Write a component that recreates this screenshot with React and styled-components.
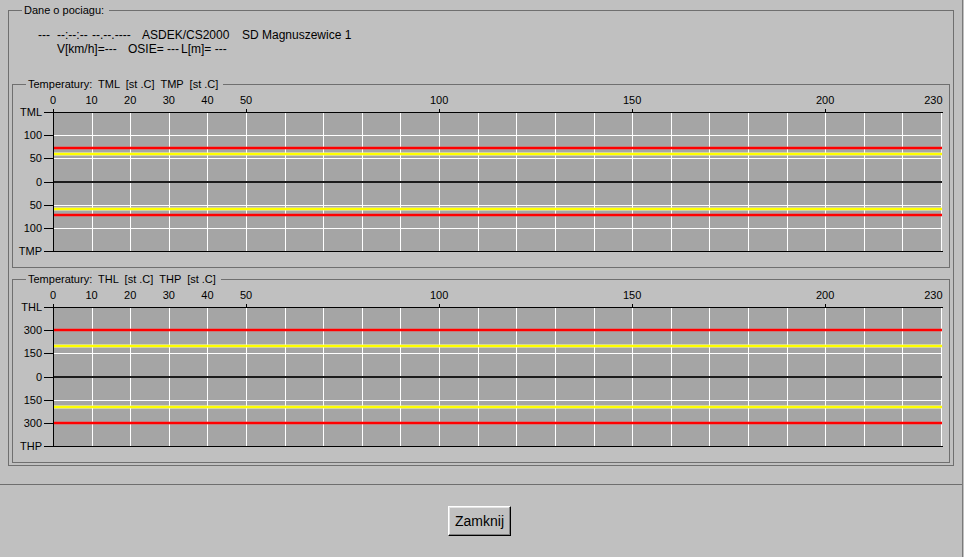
import React from 'react';
import styled, { createGlobalStyle } from 'styled-components';

const GlobalStyle = createGlobalStyle`
  html, body {
    margin: 0;
    padding: 0;
    background: #c0c0c0;
  }
  body {
    font-family: "Liberation Sans", Arial, sans-serif;
  }
`;

const Window = styled.div`
  width: 962px;
  height: 557px;
  border-right: 1px solid #7a7a7a;
  display: flex;
  flex-direction: column;
  background: #c0c0c0;
  color: #000;
  font-family: "Liberation Sans", Arial, sans-serif;
`;

const TopPanel = styled.div`
  height: 485px;
  box-sizing: border-box;
  padding: 3px 8px 0;
  border-bottom: 1px solid #6e6e6e;
`;

const Group = styled.fieldset`
  margin: ${p => (p.$inset ? '0 3px' : '0')};
  padding: 0;
  border: 1px solid #6f6f6f;
  min-width: 0;
`;

const Legend = styled.legend`
  margin-left: 13px;
  padding: 0 5px 0 2px;
  font-size: 11px;
  line-height: 14px;
  white-space: pre;
`;

const Info = styled.div`
  padding: 11px 0 21px;
  font-size: 12px;
  line-height: 14px;
`;

const InfoRow = styled.div`
  display: flex;
  padding-left: ${p => p.$indent}px;
`;

const Field = styled.span`
  flex: none;
  width: ${p => (p.$w ? `${p.$w}px` : 'auto')};
  white-space: pre;
`;

const ChartStack = styled.div`
  display: flex;
  flex-direction: column;
  gap: 4px;
  margin-bottom: 2px;
`;

const Plot = styled.svg`
  display: block;
  font-family: "Liberation Sans", Arial, sans-serif;
  font-size: 11px;
`;

const BottomPanel = styled.div`
  flex: 1;
  display: flex;
  align-items: center;
  padding-left: 448px;
`;

const Button = styled.button`
  width: 63px;
  height: 30px;
  padding: 0;
  background: #c0c0c0;
  border: 1px solid;
  border-color: #fff #000 #000 #fff;
  box-shadow: inset -1px -1px #808080, inset 1px 1px #e4e4e4;
  font: 14px "Liberation Sans", Arial, sans-serif;
  color: #000;
`;

// plot geometry (relative to the svg inside each group box)
const W = 936;
const H = 176;
const OX = 40;
const OY = 21;
const PW = 888;
const PH = 139;
const XMAX = 230;
const xAt = v => OX + (v * PW) / XMAX;
const px = n => Math.round(n) + 0.5;

const xLabels = [0, 10, 20, 30, 40, 50, 100, 150, 200, 230];
const xMajor = [0, 50, 100, 150, 200];

function Chart({ top, bottom, max, ticks, red, yellow }) {
  const yAt = v => OY + PH / 2 - (v * PH) / (2 * max);
  const yTicks = [max, ...ticks, 0, ...ticks.map(t => -t), -max];
  const vGrid = Array.from({ length: 23 }, (_, i) => px(xAt((i + 1) * 10)));
  const hGrid = [...ticks, ...ticks.map(t => -t)].map(v => px(yAt(v)));
  const right = px(xAt(XMAX));

  const label = v => (v === max ? top : v === -max ? bottom : String(Math.abs(v)));

  return (
    <Plot width={W} height={H} viewBox={`0 0 ${W} ${H}`}>
      <rect x={OX} y={OY} width={PW + 1} height={PH} fill="#a5a5a5" />
      <g stroke="#fff" strokeWidth="1" shapeRendering="crispEdges">
        {vGrid.map(x => (
          <line key={x} x1={x} y1={OY} x2={x} y2={OY + PH} />
        ))}
        {hGrid.map(y => (
          <line key={y} x1={OX} y1={y} x2={right} y2={y} />
        ))}
      </g>
      {[red, -red].map(v => (
        <g key={'r' + v}>
          <line x1={OX + 1} x2={right + 0.5} y1={Math.round(yAt(v))} y2={Math.round(yAt(v))} stroke="#ff3030" strokeOpacity="0.35" strokeWidth="4" />
          <line x1={OX + 1} x2={right + 0.5} y1={Math.round(yAt(v))} y2={Math.round(yAt(v))} stroke="#ff0000" strokeWidth="2" shapeRendering="crispEdges" />
        </g>
      ))}
      {[yellow, -yellow].map(v => (
        <g key={'y' + v}>
          <line x1={OX + 1} x2={right + 0.5} y1={Math.round(yAt(v))} y2={Math.round(yAt(v))} stroke="#ffff90" strokeOpacity="0.55" strokeWidth="4" />
          <line x1={OX + 1} x2={right + 0.5} y1={Math.round(yAt(v))} y2={Math.round(yAt(v))} stroke="#ffff00" strokeWidth="2" shapeRendering="crispEdges" />
        </g>
      ))}
      <line x1={OX} x2={right + 0.5} y1={Math.round(yAt(0))} y2={Math.round(yAt(0))} stroke="#1c1c1c" strokeWidth="2" shapeRendering="crispEdges" />
      <g stroke="#000" strokeWidth="1" shapeRendering="crispEdges">
        <line x1={OX} x2={right + 1} y1={OY + 0.5} y2={OY + 0.5} />
        <line x1={OX} x2={right + 1} y1={OY + PH + 0.5} y2={OY + PH + 0.5} />
        <line x1={OX + 0.5} x2={OX + 0.5} y1={OY - 2} y2={OY + PH + 1} />
        {xMajor.map(v => (
          <line key={v} x1={px(xAt(v))} x2={px(xAt(v))} y1={OY - 3} y2={OY} />
        ))}
        {yTicks.map(v => (
          <line key={v} x1={OX - 9} x2={OX} y1={px(yAt(v))} y2={px(yAt(v))} />
        ))}
      </g>
      <g fill="#000">
        {xLabels.map(v => (
          <text
            key={v}
            x={v === XMAX ? right + 1 : xAt(v)}
            y={12.5}
            textAnchor={v === XMAX ? 'end' : 'middle'}
          >
            {v}
          </text>
        ))}
        {yTicks.map(v => (
          <text key={v} x={OX - 11} y={Math.round(yAt(v)) + 4} textAnchor="end">
            {label(v)}
          </text>
        ))}
      </g>
    </Plot>
  );
}

const charts = [
  {
    title: 'Temperatury:  TML  [st .C]  TMP  [st .C]',
    top: 'TML',
    bottom: 'TMP',
    max: 150,
    ticks: [100, 50],
    red: 72,
    yellow: 59,
  },
  {
    title: 'Temperatury:  THL  [st .C]  THP  [st .C]',
    top: 'THL',
    bottom: 'THP',
    max: 450,
    ticks: [300, 150],
    red: 300,
    yellow: 196,
  },
];

export default function App() {
  return (
    <>
      <GlobalStyle />
      <Window>
        <TopPanel>
          <Group>
            <Legend>Dane o pociagu:</Legend>
            <Info>
              <InfoRow $indent={29}>
                <Field $w={19}>---</Field>
                <Field $w={35}>--:--:--</Field>
                <Field $w={50}>--.--.----</Field>
                <Field $w={100}>ASDEK/CS2000</Field>
                <Field>SD Magnuszewice 1</Field>
              </InfoRow>
              <InfoRow $indent={48}>
                <Field $w={71}>V[km/h]=---</Field>
                <Field $w={53}>OSIE= ---</Field>
                <Field>L[m]= ---</Field>
              </InfoRow>
            </Info>
            <ChartStack>
              {charts.map(c => (
                <Group key={c.top} $inset>
                  <Legend>{c.title}</Legend>
                  <Chart {...c} />
                </Group>
              ))}
            </ChartStack>
          </Group>
        </TopPanel>
        <BottomPanel>
          <Button>Zamknij</Button>
        </BottomPanel>
      </Window>
    </>
  );
}
